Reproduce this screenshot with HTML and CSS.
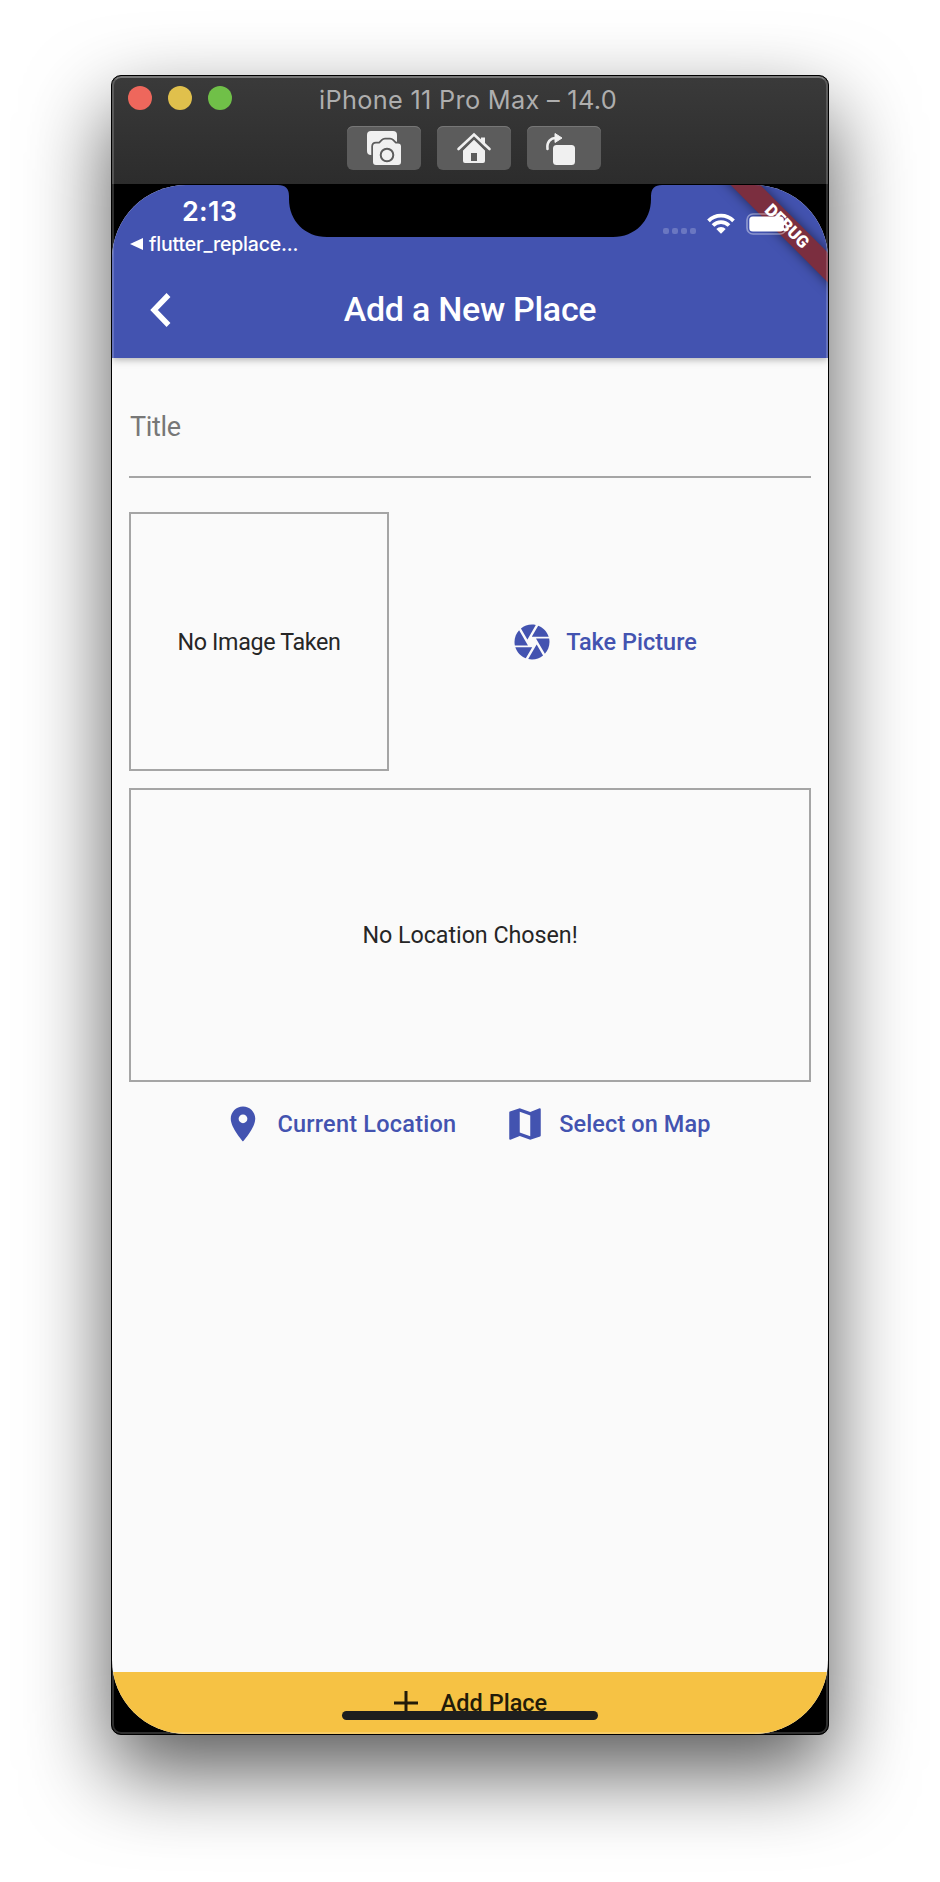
FILE: index.html
```html
<!DOCTYPE html>
<html lang="en">
<head>
<meta charset="utf-8">
<title>Add a New Place</title>
<link rel="stylesheet" href="styles.css">
</head>
<body>
<main class="window">
  <header class="titlebar">
    <div class="title-row">
      <div class="lights"><i class="red"></i><i class="yellow"></i><i class="green"></i></div>
      <span class="window-title">iPhone 11 Pro Max – 14.0</span>
    </div>
    <div class="tools">
      <button class="tool"><svg viewBox="0 0 74 44"><rect x="20" y="5" width="30" height="24" rx="4" fill="#f0f0f0"/><path d="M29 17.500h3.500l3-3q1-1 2.500-1h5q1.500 0 2.500 1l3 3H51q3 0 3 3V36q0 3-3 3H29q-3 0-3-3V20.500q0-3 3-3z" fill="#f0f0f0" stroke="#5c5c5c" stroke-width="3.500" paint-order="stroke"/><circle cx="40" cy="29" r="6.300" fill="none" stroke="#5c5c5c" stroke-width="2"/></svg></button>
      <button class="tool"><svg viewBox="0 0 74 44"><path d="M26 24L37 13.500 48 24v11q0 2-2 2H28q-2 0-2-2z" fill="#f0f0f0"/><path d="M44 11.500h4v9l-4-4z" fill="#f0f0f0"/><path d="M24.500 25L37 12.500 49.500 25" fill="none" stroke="#5c5c5c" stroke-width="1.600"/><path d="M21.500 23L37 8.500 52.500 23" fill="none" stroke="#f0f0f0" stroke-width="2.600" stroke-linecap="round"/><path d="M34 27h6v8h-6z" fill="#5c5c5c"/></svg></button>
      <button class="tool"><svg viewBox="0 0 74 44"><rect x="26" y="19" width="22" height="20" rx="3.500" fill="#f0f0f0"/><path d="M20.500 23c-1-7 3-11 8.500-11" fill="none" stroke="#f0f0f0" stroke-width="2.600" stroke-linecap="round"/><path d="M28 7.500v9L35 12z" fill="#f0f0f0" stroke="#f0f0f0" stroke-linejoin="round"/></svg></button>
    </div>
  </header>
  <div class="device">
    <div class="screen">
      <div class="top">
        <div class="status">
          <div class="status-left">
            <span class="clock">2:13</span>
            <span class="back-app"><svg viewBox="0 0 13 12"><path d="M0 6L13 0v12z" fill="#fff"/></svg><span class="app-name">flutter_replace...</span></span>
          </div>
          <div class="status-right">
            <span class="dots"><i></i><i></i><i></i><i></i></span>
            <svg class="wifi" viewBox="0 0 28 21"><g fill="none" stroke="#fff" stroke-width="3.800"><path d="M1.500 7.800a17.700 17.700 0 0 1 25 0"/><path d="M6 12.500a11.300 11.300 0 0 1 16 0"/></g><path d="M9.300 16a6.500 6.500 0 0 1 9.400 0L14 20.700z" fill="#fff"/></svg>
            <svg class="battery" viewBox="0 0 45 22"><rect x="1" y="1" width="39" height="20" rx="6" fill="none" stroke="#fff" stroke-opacity=".4" stroke-width="1.700"/><rect x="3.300" y="3.500" width="34.500" height="15" rx="3.500" fill="#fff"/></svg>
          </div>
        </div>
        <div class="appbar">
          <svg class="chevron" viewBox="0 0 22 36"><path d="M19.500 3L5 18l14.500 15" fill="none" stroke="#fff" stroke-width="5.400"/></svg>
          <span class="app-title">Add a New Place</span>
        </div>
        <div class="banner"><span>DEBUG</span></div>
      </div>
      <div class="content">
        <div class="field"><span class="label">Title</span></div>
        <div class="image-row">
          <div class="preview"><span class="t-image">No Image Taken</span></div>
          <div class="picture-cell">
            <button class="link"><svg class="icon" viewBox="0 0 24 24"><path fill="currentColor" d="M9.400 10.500l4.770-8.260C13.470 2.090 12.750 2 12 2c-2.400 0-4.600.85-6.320 2.250l3.660 6.350.06-.1zM21.540 9c-.92-2.920-3.150-5.260-6-6.340L11.880 9h9.660zm.26 1h-7.490l.29.500 4.760 8.250C21 16.970 22 14.610 22 12c0-.69-.07-1.350-.2-2zM8.540 12l-3.900-6.750C3.010 7.030 2 9.390 2 12c0 .69.070 1.350.2 2h7.490l-1.150-2zm-6.080 3c.92 2.920 3.150 5.260 6 6.340L12.120 15H2.460zm11.270 0l-3.900 6.760c.7.150 1.420.24 2.170.24 2.400 0 4.600-.85 6.320-2.250l-3.660-6.350-.93 1.600z"/></svg><span class="t-take">Take Picture</span></button>
          </div>
        </div>
        <div class="map-preview"><span class="t-loc">No Location Chosen!</span></div>
        <div class="map-actions">
          <button class="link"><svg class="icon" viewBox="0 0 24 24"><path fill="currentColor" d="M12 2C8.130 2 5 5.130 5 9c0 5.250 7 13 7 13s7-7.750 7-13c0-3.870-3.130-7-7-7zm0 9.500a2.500 2.500 0 0 1 0-5 2.500 2.500 0 0 1 0 5z"/></svg><span class="t-current">Current Location</span></button>
          <button class="link"><svg class="icon" viewBox="0 0 24 24"><path fill="currentColor" d="M20.500 3l-.16.030L15 5.100 9 3 3.360 4.900c-.21.070-.36.250-.36.480V20.500c0 .28.220.5.500.5l.16-.030L9 18.900l6 2.100 5.640-1.900c.21-.07.360-.25.360-.48V3.500c0-.28-.22-.5-.5-.5zM15 19l-6-2.110V5l6 2.110V19z"/></svg><span class="t-select">Select on Map</span></button>
        </div>
      </div>
      <button class="add"><svg class="plus" viewBox="0 0 24 24"><path d="M12 0v24M0 12h24" stroke="#221b09" stroke-width="3"/></svg><span class="t-add">Add Place</span></button>
      <svg class="notch" viewBox="0 0 384 53"><path d="M0 0h384q-11 0-11 11v3c0 22-16 38-38 38H49c-22 0-38-16-38-38v-3Q11 0 0 0z"/></svg>
      <div class="home-bar"></div>
    </div>
  </div>
</main>
</body>
</html>
```
FILE: styles.css
```css
* { box-sizing: border-box; }
body { margin: 0; height: 1882px; background: #fff; padding: 75px 111px; overflow: hidden; }
button { border: 0; background: none; padding: 0; margin: 0; font: inherit; color: inherit; }
span { white-space: nowrap; }
.window { position: relative; width: 718px; height: 1660px; border: 1px solid #000; border-radius: 10px; overflow: hidden; display: flex; flex-direction: column; background: #000; box-shadow: 0 36px 84px rgba(0,0,0,.66); }
.window::after { content: ""; position: absolute; z-index: 5; inset: 0; border: 2px solid rgba(255,255,255,.18); border-top-color: rgba(255,255,255,.32); border-radius: 9px; pointer-events: none; }
.titlebar { height: 108px; flex: none; background: linear-gradient(#3a3a3a, #2c2c2c); font-family: Inter, sans-serif; }
.title-row { height: 50px; display: grid; grid-template-columns: 1fr auto 1fr; align-items: center; padding: 0 16px; }
.lights { display: flex; gap: 16px; padding-bottom: 6px; }
.lights i { width: 24px; height: 24px; border-radius: 50%; background: #ee675c; }
.lights .yellow { background: #e0c04c; }
.lights .green { background: #70c048; }
.window-title { color: #aeaeae; font-size: 25.300px; letter-spacing: .3px; padding-bottom: 4px; margin-left: -4px; }
.tools { display: flex; gap: 16px; padding-left: 235px; }
.tool { width: 74px; height: 44px; border-radius: 6px; background: #5c5c5c; box-shadow: inset 0 1px #777; }
.tool svg { display: block; width: 74px; height: 44px; }
.device { flex: 1; padding-top: 1px; background: #000; }
.screen { position: relative; height: 1549px; border-radius: 74px; overflow: hidden; background: #fafafa; display: flex; flex-direction: column; font-family: Roboto, sans-serif; }
.top { position: relative; flex: none; background: #4353b0; color: #fff; box-shadow: 0 1px 8px rgba(0,0,0,.35); }
.status { position: relative; z-index: 2; height: 77px; display: flex; justify-content: space-between; font-family: Inter, sans-serif; }
.status-left { width: 200px; padding-left: 18px; }
.clock { display: block; font-size: 27px; letter-spacing: .3px; font-weight: 600; line-height: 32px; padding: 11px 0 0 52px; }
.back-app { display: flex; align-items: center; gap: 6px; font-size: 19.500px; letter-spacing: -.17px; line-height: 26px; font-weight: 500; margin-top: 3px; }
.back-app svg { width: 13px; height: 12px; }
.status-right { display: flex; align-items: flex-start; padding: 28px 37px 0 0; }
.dots { display: flex; gap: 3px; padding-top: 15px; }
.dots i { width: 6px; height: 6px; border-radius: 2px; background: #6a77c1; }
.wifi { width: 28px; height: 21px; margin-left: 11px; }
.battery { width: 45px; height: 22px; margin-left: 11px; }
.appbar { height: 96px; display: grid; grid-template-columns: 1fr auto 1fr; align-items: center; padding: 0 37px; }
.chevron { width: 22px; height: 36px; }
.app-title { font-size: 34px; font-weight: 500; letter-spacing: -.28px; padding-bottom: 2px; }
.content { flex: 1; padding: 0 17px; }
.field { height: 120px; border-bottom: 2px solid #a5a5a5; display: flex; align-items: center; padding: 20px 0 0 1px; }
.label { font-size: 27px; letter-spacing: -.3px; color: #777; }
.image-row { display: flex; padding-top: 34px; }
.preview { width: 260px; height: 259px; border: 2px solid #a5a5a5; display: flex; align-items: center; justify-content: center; color: #262626; font-size: 23.300px; letter-spacing: -.35px; }
.picture-cell { flex: 1; display: flex; justify-content: center; align-items: center; padding-left: 8px; }
.link { display: flex; align-items: center; gap: 13px; color: #4353b0; font-weight: 500; font-size: 23.500px; }
.icon { width: 42px; height: 42px; }
.map-preview { height: 294px; margin-top: 17px; border: 2px solid #a5a5a5; display: flex; align-items: center; justify-content: center; color: #262626; font-size: 23.300px; letter-spacing: -.05px; }
.map-actions { display: flex; justify-content: center; gap: 48px; padding: 21px 7px 0 0; }
.t-current { letter-spacing: .22px; }
.t-select { letter-spacing: .1px; }
.add { height: 62px; flex: none; background: #f6c244; display: flex; justify-content: center; gap: 23px; color: #221b09; font-size: 23.500px; font-weight: 500; padding: 17px 0 0 1px; }
.plus { width: 24px; height: 24px; margin-top: 2px; }
.banner { position: absolute; right: -99px; top: 31px; width: 280px; height: 20.500px; transform: rotate(45deg); background: #7b2e3f; box-shadow: 0 0 12px rgba(0,0,0,.5); text-align: center; font-size: 17px; font-weight: 900; line-height: 20.500px; }
.notch { position: absolute; left: 166px; top: 0; width: 384px; height: 53px; }
.home-bar { position: absolute; left: 230px; bottom: 14px; width: 256px; height: 9px; border-radius: 5px; background: #1e1e1e; }
```
